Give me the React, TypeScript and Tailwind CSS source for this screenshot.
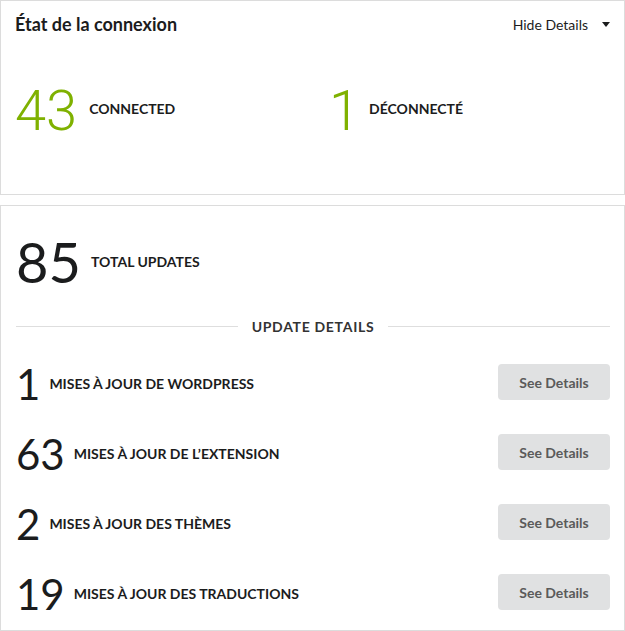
const UPDATES = [
  { count: 1, label: 'Mises à jour de WordPress' },
  { count: 63, label: "Mises à jour de l’extension" },
  { count: 2, label: 'Mises à jour des thèmes' },
  { count: 19, label: 'Mises à jour des traductions' },
]

function StatusStat({ value, label, gap }: { value: number; label: string; gap: string }) {
  return (
    <div className={`flex items-center ${gap}`}>
      <span className="font-['Roboto',sans-serif] font-light text-[56px] leading-none text-[#7fb100]">{value}</span>
      <span className="text-[14px] font-bold uppercase text-[#1b1c1d] -mt-[6px]">{label}</span>
    </div>
  )
}

function UpdateRow({ count, label }: { count: number; label: string }) {
  return (
    <div className="flex h-[70px] items-center justify-between">
      <div className="flex items-center gap-[9px]">
        <span className="text-[42px] font-normal leading-none text-[#1b1c1d] mt-[3px]">{count}</span>
        <span className="text-[14px] font-bold uppercase text-[#1b1c1d] mt-[3px]">{label}</span>
      </div>
      <button
        type="button"
        className="h-[36px] w-[112px] rounded-[4px] bg-[#e0e1e2] text-[14px] font-bold text-[#5a5a5a]"
      >
        See Details
      </button>
    </div>
  )
}

export default function App() {
  return (
    <div className="min-h-screen bg-white font-['Lato',sans-serif] text-[#1b1c1d]">
      <section className="h-[195px] border border-[#dcdcdc] px-[14px] pt-[11px]">
        <div className="flex items-center justify-between">
          <h2 className="text-[18px] font-bold leading-[24px] text-[#1b1c1d]">État de la connexion</h2>
          <button type="button" className="flex items-center gap-[14px] text-[14px] text-[#1b1c1d]">
            Hide Details
            <svg width="8" height="5" viewBox="0 0 8 5" className="fill-[#1b1c1d]">
              <path d="M0 0h8L4 5z" />
            </svg>
          </button>
        </div>
        <div className="mt-[47px] flex">
          <div className="w-[314px]">
            <StatusStat value={43} label="Connected" gap="gap-[12px]" />
          </div>
          <StatusStat value={1} label="Déconnecté" gap="gap-[9px]" />
        </div>
      </section>

      <section className="mt-[10px] h-[426px] border border-[#dcdcdc] pl-[15px] pr-[14px]">
        <div className="mt-[28px] flex items-center gap-[10px]">
          <span className="text-[56px] font-normal leading-none">85</span>
          <span className="text-[14px] font-bold uppercase -mt-[2px]">Total updates</span>
        </div>
        <div className="mt-[26px] flex items-center gap-[14px]">
          <div className="h-px flex-1 bg-[#dedede]" />
          <span className="text-[14px] font-bold uppercase tracking-[0.05em] text-[#333]">Update Details</span>
          <div className="h-px flex-1 bg-[#dedede]" />
        </div>
        <div className="mt-[10px]">
          {UPDATES.map((u) => (
            <UpdateRow key={u.label} count={u.count} label={u.label} />
          ))}
        </div>
      </section>
    </div>
  )
}
